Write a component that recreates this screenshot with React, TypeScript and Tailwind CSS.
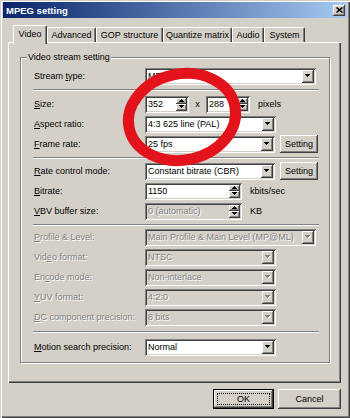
import type { ReactNode } from 'react';

const raised =
  'shadow-[inset_-1px_-1px_0_#404040,inset_1px_1px_0_#ffffff,inset_-2px_-2px_0_#808080]';
const sunken =
  'shadow-[inset_1px_1px_0_#808080,inset_-1px_-1px_0_#ffffff,inset_2px_2px_0_#404040,inset_-2px_-2px_0_#d4d0c8]';
const dimText = 'text-[#808080] [text-shadow:1px_1px_0_#ffffff]';

function Tri({ up, disabled }: { up?: boolean; disabled?: boolean }) {
  const d = up ? 'M2 0h1v1H2z M1 1h3v1H1z M0 2h5v1H0z' : 'M0 0h5v1H0z M1 1h3v1H1z M2 2h1v1H2z';
  return (
    <svg width="6" height="4" viewBox="0 0 6 4" className="block">
      {disabled && <path d={d} fill="#ffffff" transform="translate(1 1)" />}
      <path d={d} fill={disabled ? '#808080' : '#000000'} />
    </svg>
  );
}

function Combo({ w, value, disabled }: { w: string; value: string; disabled?: boolean }) {
  return (
    <div
      className={`flex h-[17px] items-center p-[2px] ${w} ${sunken} ${disabled ? 'bg-[#d4d0c8]' : 'bg-white'}`}
    >
      <span className={`flex-1 truncate pl-[1px] ${disabled ? dimText : 'text-black'}`}>{value}</span>
      <div className={`flex h-[13px] w-[12px] items-center justify-center bg-[#d4d0c8] ${raised}`}>
        <Tri disabled={disabled} />
      </div>
    </div>
  );
}

function SpinField({ w, value, disabled }: { w: string; value: string; disabled?: boolean }) {
  return (
    <div
      className={`flex h-[17px] items-center p-[2px] ${w} ${sunken} ${disabled ? 'bg-[#d4d0c8]' : 'bg-white'}`}
    >
      <span className={`flex-1 truncate pl-[1px] ${disabled ? dimText : 'text-black'}`}>{value}</span>
      <div className="flex h-[13px] w-[11px] flex-col">
        <div className={`flex flex-1 items-center justify-center bg-[#d4d0c8] ${raised}`}>
          <Tri up />
        </div>
        <div className={`flex flex-1 items-center justify-center bg-[#d4d0c8] ${raised}`}>
          <Tri />
        </div>
      </div>
    </div>
  );
}

function Btn({ children, w }: { children: ReactNode; w: string }) {
  return (
    <div className={`flex h-[18px] items-center justify-center bg-[#d4d0c8] ${w} ${raised}`}>
      {children}
    </div>
  );
}

function Row({ label, disabled, children }: { label: ReactNode; disabled?: boolean; children: ReactNode }) {
  return (
    <div className="flex h-[20px] items-center">
      <span className={`w-[111px] shrink-0 ${disabled ? dimText : ''}`}>{label}</span>
      {children}
    </div>
  );
}

function Sep({ h }: { h: string }) {
  return (
    <div className={`${h} -ml-[1px] w-[286px] pt-[3px]`}>
      <div className="border-t border-b border-t-[#808080] border-b-white" />
    </div>
  );
}

const tabs = [
  { name: 'Advanced', w: 'w-[49px]' },
  { name: 'GOP structure', w: 'w-[67px]' },
  { name: 'Quantize matrix', w: 'w-[69px]' },
  { name: 'Audio', w: 'w-[32px]' },
  { name: 'System', w: 'w-[41px]' },
];

export default function App() {
  return (
    <div className="relative h-[418px] w-[350px] overflow-hidden bg-[#d4d0c8] px-[3px] pt-[2px] font-['Liberation_Sans',Arial,sans-serif] text-[9px] leading-[11px] text-black shadow-[inset_1px_1px_0_#d4d0c8,inset_2px_2px_0_#ffffff,inset_-1px_-1px_0_#404040,inset_-2px_-2px_0_#808080]">
      {/* Title bar */}
      <div className="flex h-[16px] items-center justify-between bg-linear-to-r from-[#0a246a] to-[#a6caf0] pl-[3px] pr-[2px]">
        <span className="text-[9.5px] font-bold text-white">MPEG setting</span>
        <div className={`flex h-[11px] w-[12px] items-center justify-center bg-[#d4d0c8] ${raised}`}>
          <svg width="7" height="6" viewBox="0 0 7 6" className="block">
            <path d="M0.5 0.5 L6.5 5.5 M6.5 0.5 L0.5 5.5" stroke="#000" strokeWidth="1.6" />
          </svg>
        </div>
      </div>

      {/* Tabs */}
      <div className="ml-[10px] mt-[7px] flex h-[17px] items-end">
        <div className="relative z-10 -mb-[2px] flex h-[19px] w-[34px] items-start justify-center rounded-t-[2px] border-l border-t border-r border-l-white border-t-white border-r-[#404040] bg-[#d4d0c8] pt-[3px] shadow-[inset_-1px_0_0_#808080]">
          Video
        </div>
        {tabs.map(t => (
          <div
            key={t.name}
            className={`flex h-[15px] items-center justify-center rounded-t-[2px] border-l border-t border-r border-l-white border-t-white border-r-[#404040] shadow-[inset_-1px_0_0_#808080] ${t.w}`}
          >
            {t.name}
          </div>
        ))}
      </div>

      {/* Tab panel */}
      <div className="ml-[5px] h-[341px] w-[333px] border-l border-t border-white px-[11px] pt-[14px] shadow-[inset_-1px_-1px_0_#404040,inset_-2px_-2px_0_#808080]">
        <div className="h-[306px] w-[310px] border border-[#808080] pl-[13px] pr-[11px] shadow-[inset_1px_1px_0_#ffffff,1px_1px_0_#ffffff]">
          <span className="-ml-[7px] -mt-[6px] block w-fit bg-[#d4d0c8] px-[1px]">Video stream setting</span>
          <div className="mt-[3px]">
            <Row label={<>Stream <u>t</u>ype:</>}>
              <Combo w="w-[171px]" value="MPEG-1" />
            </Row>
            <Sep h="h-[8px]" />
            <Row label={<><u>S</u>ize:</>}>
              <SpinField w="w-[44px]" value="352" />
              <span className="w-[17px] text-center">x</span>
              <SpinField w="w-[44px]" value="288" />
              <span className="ml-[8px]">pixels</span>
            </Row>
            <Row label={<><u>A</u>spect ratio:</>}>
              <Combo w="w-[131px]" value="4:3 625 line (PAL)" />
            </Row>
            <Row label={<><u>F</u>rame rate:</>}>
              <Combo w="w-[131px]" value="25 fps" />
              <div className="ml-[5px]">
                <Btn w="w-[38px]">Setting</Btn>
              </div>
            </Row>
            <Sep h="h-[7px]" />
            <Row label={<><u>R</u>ate control mode:</>}>
              <Combo w="w-[131px]" value="Constant bitrate (CBR)" />
              <div className="ml-[5px]">
                <Btn w="w-[38px]">Setting</Btn>
              </div>
            </Row>
            <Row label={<><u>B</u>itrate:</>}>
              <SpinField w="w-[97px]" value="1150" />
              <span className="ml-[8px]">kbits/sec</span>
            </Row>
            <Row label={<><u>V</u>BV buffer size:</>}>
              <SpinField w="w-[97px]" value="0 (automatic)" disabled />
              <span className="ml-[8px]">KB</span>
            </Row>
            <Sep h="h-[6px]" />
            <Row disabled label={<><u>P</u>rofile &amp; Level:</>}>
              <Combo w="w-[171px]" value="Main Profile & Main Level (MP@ML)" disabled />
            </Row>
            <Row disabled label={<>Vid<u>e</u>o format:</>}>
              <Combo w="w-[131px]" value="NTSC" disabled />
            </Row>
            <Row disabled label={<>En<u>c</u>ode mode:</>}>
              <Combo w="w-[131px]" value="Non-interlace" disabled />
            </Row>
            <Row disabled label={<><u>Y</u>UV format:</>}>
              <Combo w="w-[131px]" value="4:2:0" disabled />
            </Row>
            <Row disabled label={<><u>D</u>C component precision:</>}>
              <Combo w="w-[131px]" value="8 bits" disabled />
            </Row>
            <div className="h-[10px] -ml-[1px] w-[286px] pt-[4px]">
              <div className="border-t border-b border-t-[#808080] border-b-white" />
            </div>
            <Row label={<><u>M</u>otion search precision:</>}>
              <Combo w="w-[131px]" value="Normal" />
            </Row>
          </div>
        </div>
      </div>

      {/* Buttons */}
      <div className="mt-[6px] flex justify-end gap-[4px] pr-[6px]">
        <div className="h-[20px] w-[61px] border border-black">
          <div className={`flex h-full w-full items-center justify-center bg-[#d4d0c8] p-[3px] ${raised}`}>
            <div className="flex h-full w-full items-center justify-center border border-dotted border-black">
              OK
            </div>
          </div>
        </div>
        <div className={`flex h-[20px] w-[63px] items-center justify-center bg-[#d4d0c8] ${raised}`}>Cancel</div>
      </div>

      {/* Red annotation circle */}
      <svg
        width="350"
        height="418"
        viewBox="0 0 350 418"
        className="pointer-events-none absolute left-0 top-0"
      >
        <ellipse
          cx="182"
          cy="117"
          rx="54"
          ry="43"
          transform="rotate(-12 182 117)"
          fill="none"
          stroke="#e3131b"
          strokeWidth="11"
        />
      </svg>
    </div>
  );
}
